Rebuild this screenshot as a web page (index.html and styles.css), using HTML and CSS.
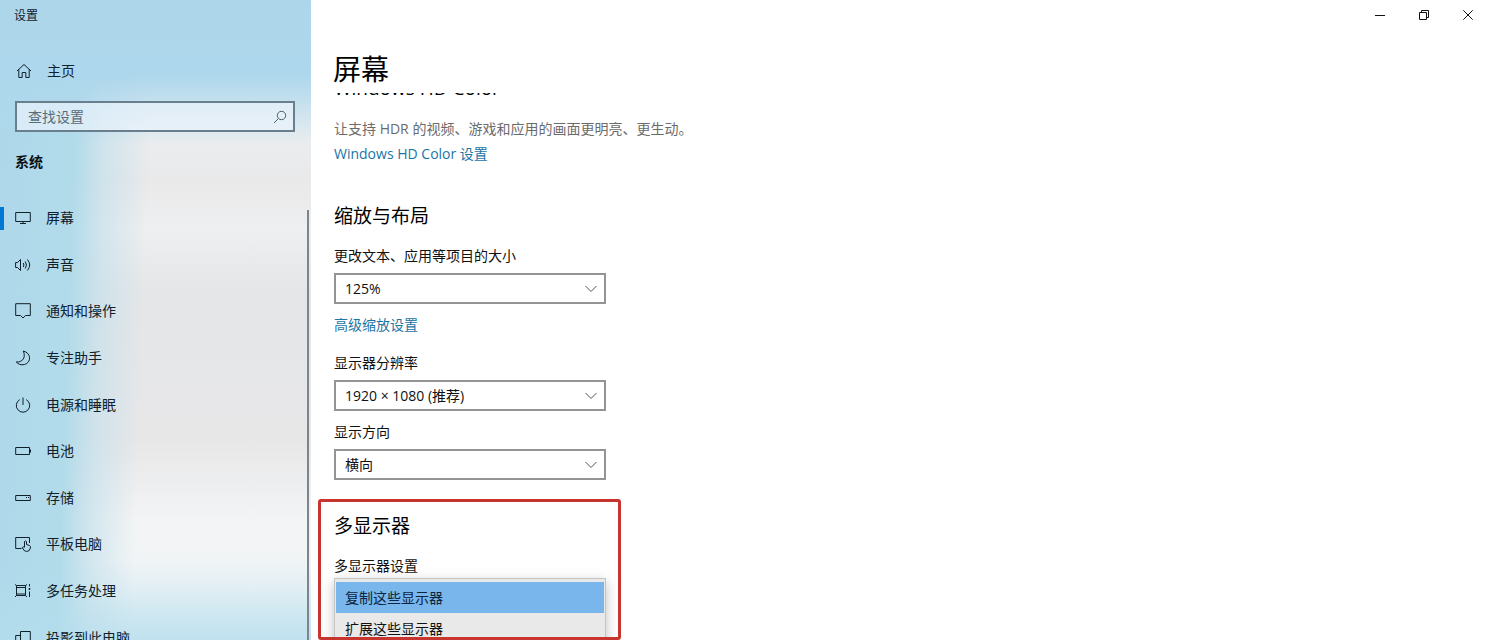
FILE: index.html
```html
<!DOCTYPE html>
<html lang="zh-CN">
<head>
<meta charset="utf-8">
<title>设置</title>
<link rel="stylesheet" href="styles.css">
</head>
<body>
<div class="window">
  <aside class="sidebar">
    <div class="app-name">设置</div>
    <a class="home" href="#">
      <svg class="icon" viewBox="0 0 16 16"><path d="M1 8 8 1.500 15 8M2.800 6.500V14.500H6.200V9.500H9.800V14.500H13.200V6.500"/></svg>
      <span>主页</span>
    </a>
    <div class="search">
      <input type="text" placeholder="查找设置" aria-label="查找设置">
      <svg class="search-icon" viewBox="0 0 14 14"><circle cx="8.500" cy="5.500" r="4.200"/><path d="M5.500 8.500 1 13"/></svg>
    </div>
    <h2 class="group">系统</h2>
    <nav class="nav">
      <a class="nav-item selected" href="#"><svg class="icon" viewBox="0 0 16 16"><path d="M.700 2.500H15.300V11.500H.700ZM8 11.500V13.500M5 13.500H11"/></svg><span>屏幕</span></a>
      <a class="nav-item" href="#"><svg class="icon" viewBox="0 0 16 16"><path d="M.600 5.500H2.500L5.500 2.500V13.500L2.500 10.500H.600ZM8.300 6Q9.500 8 8.300 10M10.300 4.500Q12.600 8 10.300 11.500M12.400 2.500Q17 8 12.400 13.500"/></svg><span>声音</span></a>
      <a class="nav-item" href="#"><svg class="icon" viewBox="0 0 16 16"><path d="M.700 .700H15.300V12.500H10.500L8 15 5.500 12.500H.700Z"/></svg><span>通知和操作</span></a>
      <a class="nav-item" href="#"><svg class="icon" viewBox="0 0 16 16"><path d="M8.300 1C16.500 3 16.500 12.500 9.500 14.500 6 15.500 3 14 1.200 12 8 12.500 11 7 8.300 1Z"/></svg><span>专注助手</span></a>
      <a class="nav-item" href="#"><svg class="icon" viewBox="0 0 16 16"><path d="M8 .500V8M4.800 2.600A6.700 6.700 0 1 0 11.200 2.600"/></svg><span>电源和睡眠</span></a>
      <a class="nav-item" href="#"><svg class="icon" viewBox="0 0 16 16"><path d="M.700 4.500H14.500V11.500H.700ZM15.500 6.500V9.500"/></svg><span>电池</span></a>
      <a class="nav-item" href="#"><svg class="icon" viewBox="0 0 16 16"><path d="M.700 5.500H15.300V10.500H.700ZM11 7.500H12M13 7.500H14"/></svg><span>存储</span></a>
      <a class="nav-item" href="#"><svg class="icon" viewBox="0 0 16 16"><path d="M6.500 12.500H.700V1.500H14.500V7M9.500 11V5.500Q10.500 4.300 11.500 5.500V8.500L14.500 9.500Q15.800 10 15.400 12 14.800 15.500 11.500 15.500 9 15.500 7.200 11.500 8.200 10.300 9.500 11.500"/></svg><span>平板电脑</span></a>
      <a class="nav-item" href="#"><svg class="icon" viewBox="0 0 16 16"><path d="M1.500 2.500V12.500M10.500 2.500V12.500M1.500 4.500H10.500M1.500 11H10.500M0 1.500 1.500 2.500H10.500L12 1.500M0 14 1.500 12.500H10.500L12 14M14.500 1V3.500M14.500 8.500V14"/><path d="M14 5.500H15V6.500H14Z" fill="currentColor"/></svg><span>多任务处理</span></a>
      <a class="nav-item" href="#"><svg class="icon" viewBox="0 0 16 16"><path d="M5.500 1.500H15.300V10.500H5.500ZM5.500 5.500H.700V13.500H10.500V10.500"/></svg><span>投影到此电脑</span></a>
    </nav>
    <div class="scroll-thumb"></div>
  </aside>

  <main class="main">
    <div class="caption">
      <button type="button" aria-label="最小化"><svg viewBox="0 0 10 10"><path d="M0 5.500H10"/></svg></button>
      <button type="button" aria-label="还原"><svg viewBox="0 0 10 10"><path d="M.500 2.500H7.500V9.500H.500ZM2.500 2.500V.500H9.500V7.500H7.500"/></svg></button>
      <button type="button" aria-label="关闭"><svg viewBox="0 0 10 10"><path d="M.300 .300 9.700 9.700M9.700 .300 .300 9.700"/></svg></button>
    </div>
    <h1 class="page-title">屏幕</h1>
    <div class="content">
      <h2 class="section-title scrolled">Windows HD Color</h2>
      <p class="description">让支持 HDR 的视频、游戏和应用的画面更明亮、更生动。</p>
      <a class="link" href="#">Windows HD Color 设置</a>

      <h2 class="section-title scale-title">缩放与布局</h2>
      <label class="label" for="scale">更改文本、应用等项目的大小</label>
      <div class="field">
        <select id="scale"><option>125%</option></select>
        <svg class="chevron" viewBox="0 0 12 8"><path d="M.500 1 6 6.500 11.500 1"/></svg>
      </div>
      <a class="link advanced" href="#">高级缩放设置</a>
      <label class="label resolution" for="resolution">显示器分辨率</label>
      <div class="field">
        <select id="resolution"><option>1920 × 1080 (推荐)</option></select>
        <svg class="chevron" viewBox="0 0 12 8"><path d="M.500 1 6 6.500 11.500 1"/></svg>
      </div>
      <label class="label direction" for="direction">显示方向</label>
      <div class="field">
        <select id="direction"><option>横向</option></select>
        <svg class="chevron" viewBox="0 0 12 8"><path d="M.500 1 6 6.500 11.500 1"/></svg>
      </div>

      <section class="highlight">
        <h2 class="section-title">多显示器</h2>
        <div class="label" id="multi">多显示器设置</div>
        <div class="menu" role="listbox" aria-labelledby="multi">
          <button class="option active" type="button" role="option" aria-selected="true">复制这些显示器</button>
          <button class="option" type="button" role="option" aria-selected="false">扩展这些显示器</button>
        </div>
      </section>
    </div>
  </main>
</div>
</body>
</html>
```
FILE: styles.css
```css
* { box-sizing: border-box; }

body {
  margin: 0;
  background: #fff;
  color: #111;
  font: 14px/20px "Open Sans", "Noto Sans CJK SC", sans-serif;
}

h1, h2, p { margin: 0; font-weight: 400; }
a { color: inherit; text-decoration: none; }
button, input, select { font: inherit; color: inherit; }

svg {
  display: block;
  fill: none;
  stroke: currentColor;
  stroke-width: 1;
}

.window {
  display: flex;
  height: 100vh;
  overflow: hidden;
}

/* Sidebar */
.sidebar {
  position: relative;
  flex: 0 0 311px;
  overflow: hidden;
  color: #10202c;
  background:
    linear-gradient(#aed6eb 0, #add7ec 75px, #add7ec00 145px),
    linear-gradient(#b4deed00 560px, #b4deedaa 640px),
    linear-gradient(92deg, #aed8ea 0, #b2dbea 80px, #c4e0ebaa 110px, #d8e5ea00 155px),
    linear-gradient(#ebeef0 130px, #e9e9ea 180px, #eeeff0 230px, #e5e6e8 290px, #e7e7e8 440px, #f3f4f5 520px, #f0f4f6 590px, #d8e9f1 640px);
}

.app-name {
  padding: 6px 14px 0;
  font-size: 12px;
}

.home {
  display: flex;
  align-items: center;
  gap: 15px;
  margin-top: 35px;
  padding: 0 16px;
}

.icon { flex: none; width: 16px; height: 16px; }

.search {
  display: flex;
  align-items: center;
  height: 31px;
  margin: 20px 16px 0 15px;
  padding: 0 6px 0 11px;
  border: 2px solid #697f8d;
  background: #edf5fcaa;
}

.search input {
  flex: 1;
  min-width: 0;
  padding: 0;
  border: 0;
  outline: 0;
  background: none;
}

.search input::placeholder { color: #596b78; opacity: 1; }
.search-icon { width: 14px; height: 14px; color: #4d606d; }

.group {
  margin: 20px 15px 23px;
  color: #080f14;
  font-size: 14px;
  font-weight: 700;
}

.nav {
  display: grid;
  grid-auto-rows: 1fr;
  height: 466px;
}

.nav-item {
  display: flex;
  align-items: center;
  gap: 15px;
  padding-left: 15px;
}

.selected { padding-left: 0; }

.selected::before {
  content: "";
  width: 4px;
  height: 23px;
  margin-right: -15px;
  background: #0078d4;
}

.selected .icon { margin-left: 11px; }

.scroll-thumb {
  position: absolute;
  top: 210px;
  right: 2px;
  bottom: 0;
  width: 2px;
  background: #7d858b;
}

/* Main pane */
.main {
  display: flex;
  flex: 1;
  flex-direction: column;
  min-width: 0;
}

.caption {
  display: flex;
  justify-content: flex-end;
  padding-right: 1px;
}

.caption button {
  display: grid;
  place-items: center;
  width: 44px;
  height: 30px;
  padding: 0;
  border: 0;
  background: none;
}

.caption svg { width: 10px; height: 10px; }

.page-title {
  margin-top: 21px;
  padding-left: 22px;
  color: #000;
  font-size: 28px;
  line-height: 36px;
}

.content {
  display: flex;
  flex: 1;
  flex-direction: column;
  align-items: flex-start;
  min-height: 0;
  margin-top: 6px;
  padding-left: 23px;
  overflow: hidden;
}

.section-title {
  color: #000;
  font-size: 19px;
  line-height: 28px;
}

.scrolled { margin-top: -19px; }
.description { margin-top: 17px; color: #6b6b6b; }
.link { margin-top: 5px; color: #1b75a5; }
.scale-title { margin: 38px 0 16px; }

.field {
  position: relative;
  width: 272px;
  margin-top: 7px;
}

.field select {
  display: block;
  width: 100%;
  height: 31px;
  padding: 0 30px 0 9px;
  border: 2px solid #949494;
  border-radius: 0;
  background: #fff;
  appearance: none;
}

.chevron {
  position: absolute;
  top: 12px;
  right: 9px;
  width: 12px;
  height: 8px;
  color: #555;
  pointer-events: none;
}

.advanced { margin-top: 11px; }
.resolution { margin-top: 18px; }
.direction { margin-top: 11px; }

.highlight {
  flex: 1;
  width: 303px;
  min-height: 0;
  margin: 19px 0 0 -16px;
  padding: 10px 12px 0 13px;
  border: 3px solid #c8352e;
  border-radius: 3px;
  overflow: hidden;
}

.highlight .label { margin-top: 16px; }

.menu {
  margin-top: 2px;
  padding: 3px 1px;
  border: 1px solid #c4c4c4;
  background: #e9e9e9;
  box-shadow: 0 4px 12px #00000040;
}

.option {
  display: block;
  width: 100%;
  height: 31px;
  padding: 0 9px;
  border: 0;
  background: none;
  text-align: left;
}

.active { background: #78b6eb; color: #0b2340; }
```
